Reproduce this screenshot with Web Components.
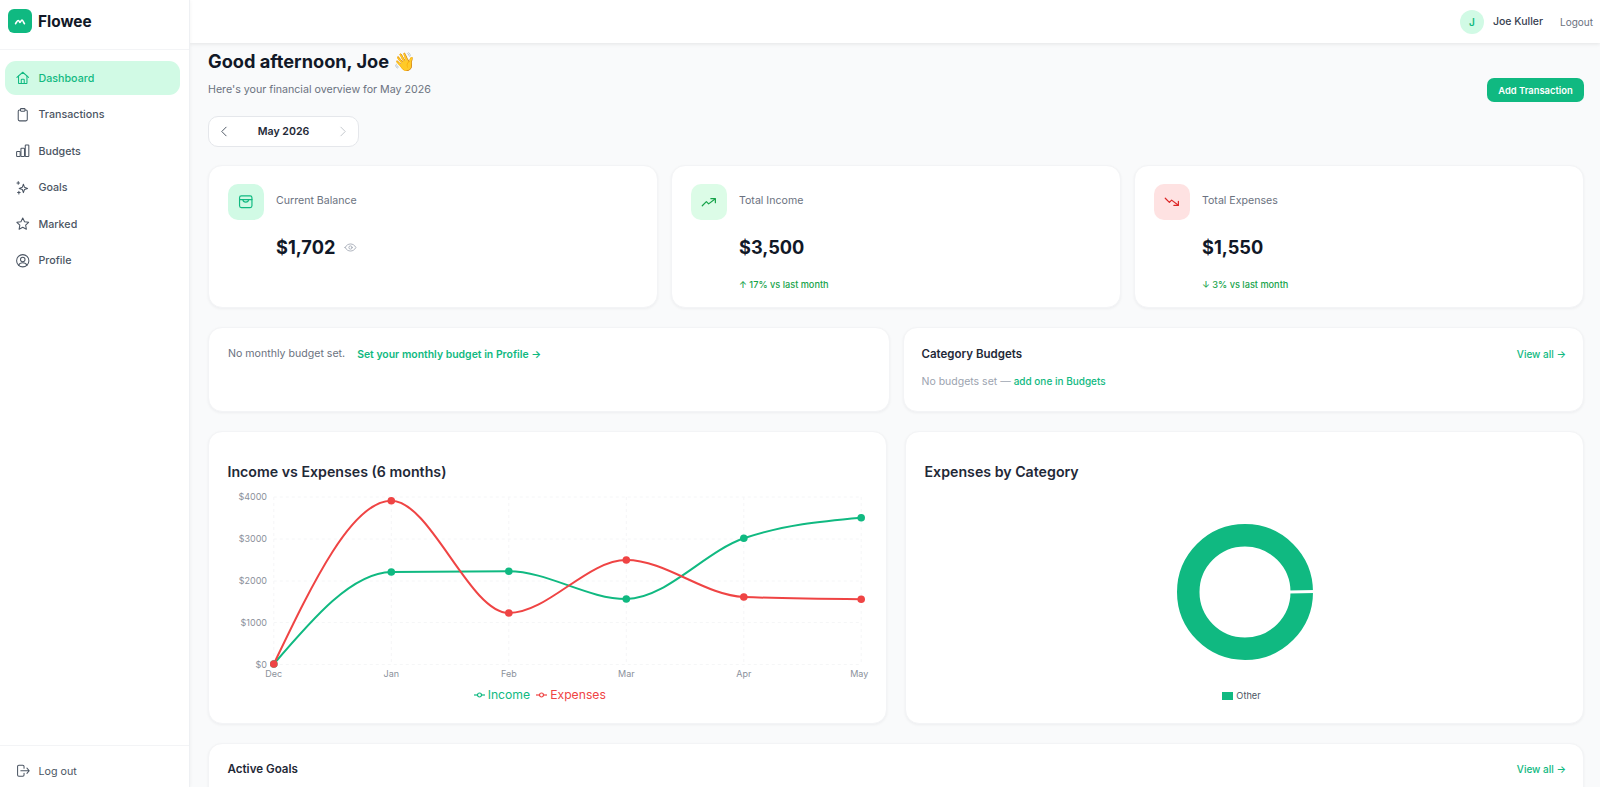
<!DOCTYPE html>
<html><head><meta charset="utf-8"><title>Flowee</title>
<style>
html,body{margin:0;padding:0;height:100%;overflow:hidden;background:#f9fafb;font-family:Inter,"Noto Sans",sans-serif;color:#111827}
</style></head><body>
<flowee-app>
  <flowee-sidebar slot="side">
    <nav-item icon="home" active>Dashboard</nav-item>
    <nav-item icon="clip">Transactions</nav-item>
    <nav-item icon="bars">Budgets</nav-item>
    <nav-item icon="spark">Goals</nav-item>
    <nav-item icon="star">Marked</nav-item>
    <nav-item icon="user">Profile</nav-item>
  </flowee-sidebar>
  <flowee-topbar slot="top"></flowee-topbar>
  <page-head></page-head>
  <month-picker></month-picker>
  <card-row cols="3" gap="13" top="18">
    <stat-card icon="wallet" tone="mint" label="Current Balance" value="$1,702" eye></stat-card>
    <stat-card icon="up" tone="green" label="Total Income" value="$3,500" delta="↑ 17% vs last month"></stat-card>
    <stat-card icon="down" tone="red" label="Total Expenses" value="$1,550" delta="↓ 3% vs last month"></stat-card>
  </card-row>
  <card-row cols="2" gap="13" top="19">
    <budget-note></budget-note>
    <category-budgets></category-budgets>
  </card-row>
  <card-row cols="2" gap="18" top="19.500">
    <line-chart></line-chart>
    <donut-chart></donut-chart>
  </card-row>
  <card-row cols="1" gap="0" top="19">
    <active-goals></active-goals>
  </card-row>
</flowee-app>
<script>
const ICONS={
home:'<path d="M3 11.500 12 3.500l9 8"/><path d="M5.500 9.500V20a.8.8 0 0 0 .8.8h11.400a.8.8 0 0 0 .8-.8V9.500"/><path d="M9.700 20.800v-5.600a1 1 0 0 1 1-1h2.600a1 1 0 0 1 1 1v5.600"/>',
clip:'<path d="M8.500 4.500H7A2 2 0 0 0 5 6.500v13a2 2 0 0 0 2 2h10a2 2 0 0 0 2-2v-13a2 2 0 0 0-2-2h-1.500"/><rect x="8.500" y="2.500" width="7" height="4" rx="1"/>',
bars:'<rect x="2.500" y="13" width="5.500" height="8" rx="1"/><rect x="9.200" y="8" width="5.500" height="13" rx="1"/><rect x="15.900" y="3" width="5.500" height="18" rx="1"/>',
spark:'<path d="M13 6.500l1.700 4.800 4.800 1.700-4.800 1.700-1.700 4.800-1.700-4.800-4.800-1.700 4.800-1.700z"/><path d="M5 2.500v4M3 4.500h4M6 17.500v4M4 19.500h4"/>',
star:'<path d="M12 3l2.800 5.800 6.300.9-4.600 4.400 1.100 6.300L12 17.500 6.400 20.400l1.100-6.300-4.600-4.400 6.300-.9z"/>',
user:'<circle cx="12" cy="12" r="9.500"/><circle cx="12" cy="10" r="3.500"/><path d="M5.500 19c1.200-2.600 3.600-3.800 6.500-3.800s5.300 1.200 6.500 3.800"/>',
logout:'<path d="M14 8V5.500A2 2 0 0 0 12 3.500H6A2 2 0 0 0 4 5.500v13a2 2 0 0 0 2 2h6a2 2 0 0 0 2-2V16"/><path d="M9 12h13M18.500 8l3.500 4-3.500 4"/>',
wallet:'<rect x="3.500" y="4" width="17" height="16" rx="2.500"/><path d="M3.500 9h17"/><path d="M8 9c.3 2.300 2 3.500 4 3.500s3.700-1.200 4-3.500"/>',
up:'<path d="M3 17l5.500-5.500 3 3L20 8"/><path d="M14.500 7.500H20.500V13"/>',
down:'<path d="M3 7l5.500 5.500 3-3L20 16"/><path d="M14.500 16.500H20.500V11"/>',
eye:'<path d="M2 12c2.500-4.500 6-6.500 10-6.500s7.500 2 10 6.500c-2.500 4.500-6 6.500-10 6.500S4.500 16.500 2 12z"/><circle cx="12" cy="12" r="3"/>',
left:'<path d="M15 4l-8 8 8 8"/>',
right:'<path d="M9 4l8 8-8 8"/>'};
function svg(name,size,color,sw){return `<svg xmlns="http://www.w3.org/2000/svg" width="${size}" height="${size}" viewBox="0 0 24 24" fill="none" stroke="${color}" stroke-width="${sw}" stroke-linecap="round" stroke-linejoin="round" aria-hidden="true">${ICONS[name]}</svg>`}
class Base extends HTMLElement{
  constructor(){super();this.attachShadow({mode:'open'});}
  connectedCallback(){this.shadowRoot.innerHTML=this.render();}
}
customElements.define('flowee-app',class extends Base{render(){return `<style>
:host{display:grid;grid-template-columns:190px 1fr;grid-template-rows:43px 1fr;height:787px;overflow:hidden}
.side{grid-row:1/3;grid-column:1;position:relative;z-index:3;display:flex;min-height:0}
.top{grid-row:1;grid-column:2;position:relative;z-index:2;display:flex}
main{grid-row:2;grid-column:2;overflow:hidden;padding:0 16px 0 18px;min-width:0}
</style><div class="side"><slot name="side"></slot></div><div class="top"><slot name="top"></slot></div><main><slot></slot></main>`}});
customElements.define('flowee-sidebar',class extends Base{render(){return `<style>
:host{display:flex;flex-direction:column;width:190px;box-sizing:border-box;background:#fff;border-right:1px solid #eef0f3;box-shadow:1px 0 3px rgba(0,0,0,.03)}
.brand{height:50px;box-sizing:border-box;border-bottom:1px solid #f3f4f6;display:flex;align-items:flex-start;padding:9px 0 0 8px;gap:6px}
.logo{width:24px;height:24px;border-radius:6px;background:#10b981;display:flex;align-items:center;justify-content:center}
.name{font-size:15.400px;font-weight:700;line-height:25px;color:#111827}
nav{flex:1;padding:11px 9px 0 5px;display:flex;flex-direction:column;gap:2.500px}
.foot{height:42px;box-sizing:border-box;border-top:1px solid #f3f4f6;padding:9px 9px 0 5px;display:flex;align-items:center}
</style><div class="brand"><span class="logo"><svg width="12" height="9" viewBox="0 0 14 10" fill="none" stroke="#fff" stroke-width="1.900" stroke-linecap="round" stroke-linejoin="round"><path d="M1.800 7.500C3 6 3.800 3.800 5 3.800S6.300 6 7 6 8.300 3.300 9.300 3.300 11 6 12.200 7.500"/></svg></span><span class="name">Flowee</span></div>
<nav><slot></slot></nav><div class="foot"><nav-item icon="logout" style="font-weight:400">Log out</nav-item></div>`}});
customElements.define('nav-item',class extends Base{render(){const a=this.hasAttribute('active');const c=a?'#10b981':'#4b5563';return `<style>
:host{display:flex;align-items:center;height:34px;box-sizing:border-box;padding-left:9.500px;gap:8.500px;border-radius:11px;font-size:10.700px;font-weight:500;flex:none;width:100%;color:${c};${a?'background:#d1fae5;':''}}
svg{display:block;flex:none}
</style>${svg(this.getAttribute('icon'),15.500,c,1.600)}<span><slot></slot></span>`}});
customElements.define('flowee-topbar',class extends Base{render(){return `<style>
:host{display:flex;flex:1;align-items:center;justify-content:flex-end;background:#fff;box-shadow:0 1px 4px rgba(0,0,0,.09);padding-right:7px;font-size:10.500px}
.av{width:24px;height:24px;border-radius:50%;background:#d1fae5;color:#10b981;font-weight:600;display:flex;align-items:center;justify-content:center;margin-right:9px;font-size:10px}
.n{font-weight:500;color:#374151;margin-right:17px}.l{color:#6b7280;font-size:10px}
</style><span class="av">J</span><span class="n">Joe Kuller</span><span class="l">Logout</span>`}});
customElements.define('page-head',class extends Base{render(){return `<style>
:host{display:flex;justify-content:space-between;align-items:flex-end}
h1{margin:5px 0 0;font-size:18.200px;line-height:26px;font-weight:700;color:#111827}
p{margin:8px 0 0;font-size:10.650px;line-height:16px;color:#6b7280}
button{all:unset;box-sizing:border-box;width:97px;height:24px;border-radius:7px;background:#10b981;color:#fff;font-size:9.400px;font-weight:600;display:flex;align-items:center;justify-content:center;margin-bottom:-4px}
</style><div><h1>Good afternoon, Joe 👋</h1><p>Here's your financial overview for May 2026</p></div><button>Add Transaction</button>`}});
customElements.define('month-picker',class extends Base{render(){return `<style>
:host{display:flex;align-items:center;justify-content:space-between;width:151px;height:31px;box-sizing:border-box;margin-top:18px;background:#fff;border:1px solid #e5e7eb;border-radius:10px;padding:0 9px;font-size:10.600px;font-weight:600;color:#1f2937}
svg{display:block}
</style>${svg('left',13,'#4b5563',1.800)}<span>May 2026</span>${svg('right',13,'#c2c6cc',1.800)}`}});
customElements.define('card-row',class extends Base{render(){const c=this.getAttribute('cols');return `<style>
:host{display:grid;grid-template-columns:repeat(${c},minmax(0,1fr));column-gap:${this.getAttribute('gap')}px;margin-top:${this.getAttribute('top')}px}
</style><slot></slot>`}});
const CARD=':host{display:block;box-sizing:border-box;background:#fff;border:1px solid #f3f4f6;border-radius:14px;box-shadow:0 1px 3px rgba(17,24,39,.05);min-width:0}';
customElements.define('stat-card',class extends Base{render(){
 const t={mint:['#d1fae5','#10b981'],green:['#dcfce7','#16a34a'],red:['#fee2e2','#dc2626']}[this.getAttribute('tone')];
 const d=this.getAttribute('delta');
 return `<style>${CARD}
:host{height:143px;padding:18px 19px;display:grid;grid-template-columns:36px 1fr;column-gap:12px;align-content:start}
.ic{width:36px;height:36px;border-radius:10px;background:${t[0]};display:flex;align-items:center;justify-content:center}
.l{font-size:10.600px;color:#6b7280;line-height:16px;margin-top:9px}
.v{grid-column:2;display:flex;align-items:center;gap:9px;font-size:18.200px;font-weight:700;color:#111827;line-height:28px;margin-top:13px}
.d{grid-column:2;font-size:9.200px;font-weight:500;color:#16a34a;line-height:14px;margin-top:17px}
svg{display:block}
</style><div class="ic">${svg(this.getAttribute('icon'),this.getAttribute('icon')=='wallet'?17.500:18,t[1],1.600)}</div><div class="l">${this.getAttribute('label')}</div>
<div class="v"><span>${this.getAttribute('value')}</span>${this.hasAttribute('eye')?svg('eye',13,'#9ca3af',1.500):''}</div>${d?`<div class="d">${d}</div>`:''}`}});
customElements.define('budget-note',class extends Base{render(){return `<style>${CARD}
:host{height:84.500px;padding:18px 19px;font-size:10.600px;line-height:16px;display:flex;gap:12px;align-items:flex-start}
span{color:#6b7280}a{color:#10b981;font-weight:600;font-size:10.450px;text-decoration:none;margin-top:.5px}
</style><span>No monthly budget set.</span><a>Set your monthly budget in Profile →</a>`}});
customElements.define('category-budgets',class extends Base{render(){return `<style>${CARD}
:host{height:84.500px;padding:18px 17px 0 18px}
.h{display:flex;justify-content:space-between;align-items:center;line-height:16px}
b{font-size:11.500px;font-weight:600;color:#1f2937}a{color:#10b981;font-weight:500;font-size:10px;text-decoration:none}
p{margin:12px 0 0;font-size:10.500px;line-height:14px;color:#9ca3af}
</style><div class="h"><b>Category Budgets</b><a>View all →</a></div><p>No budgets set — <a>add one in Budgets</a></p>`}});
customElements.define('line-chart',class extends Base{
 render(){
  const X=[273.300,390.800,508.300,625.800,743.300,860.700],Ox=227.500,Oy=488;
  const inc=[664,572,571.300,599,538.300,517.700],exp=[664,500.700,613,560,597,599.300];
  const tick=['$4000','$3000','$2000','$1000','$0'],gy=[497,539,581,622.500,664.500];
  const mon=['Dec','Jan','Feb','Mar','Apr','May'];
  const sgn=v=>v<0?-1:1;
  const path=(ys)=>{const P=X.map((x,i)=>[x-Ox,ys[i]-Oy]);const n=P.length,T=[];
   for(let i=1;i<n-1;i++){const h0=P[i][0]-P[i-1][0],h1=P[i+1][0]-P[i][0],s0=(P[i][1]-P[i-1][1])/h0,s1=(P[i+1][1]-P[i][1])/h1,p=(s0*h1+s1*h0)/(h0+h1);
    T[i]=(sgn(s0)+sgn(s1))*Math.min(Math.abs(s0),Math.abs(s1),.5*Math.abs(p))||0;}
   T[0]=(3*(P[1][1]-P[0][1])/(P[1][0]-P[0][0])-T[1])/2;
   T[n-1]=(3*(P[n-1][1]-P[n-2][1])/(P[n-1][0]-P[n-2][0])-T[n-2])/2;
   let d=`M${P[0][0]} ${P[0][1]}`;
   for(let i=1;i<n;i++){const dx=(P[i][0]-P[i-1][0])/3;d+=`C${P[i-1][0]+dx} ${P[i-1][1]+dx*T[i-1]} ${P[i][0]-dx} ${P[i][1]-dx*T[i]} ${P[i][0]} ${P[i][1]}`;}
   return d;};
  const grid=gy.map(y=>`<line x1="${X[0]-Ox}" x2="${X[5]-Ox}" y1="${y-Oy}" y2="${y-Oy}"/>`).join('')+X.map(x=>`<line x1="${x-Ox}" x2="${x-Ox}" y1="${gy[0]-Oy}" y2="${gy[4]-Oy}"/>`).join('');
  const dots=(ys,c)=>X.map((x,i)=>`<circle cx="${x-Ox}" cy="${ys[i]-Oy}" r="3.800" fill="${c}"/>`).join('');
  return `<style>${CARD}
:host{height:293px;padding:30px 0 0 18.500px}
h3{margin:0;font-size:14.200px;line-height:20px;font-weight:600;color:#1f2937}
svg{display:block}
.c{display:block;margin-top:6px}
.leg{display:flex;justify-content:center;gap:6px;font-size:12.200px;line-height:16px;margin:1px 34px 0 0}
.it{display:flex;align-items:center;gap:3px}
</style><h3>Income vs Expenses (6 months)</h3>
<svg class="c" width="645" height="198" viewBox="0 0 645 198" font-family="Inter,sans-serif">
<g stroke="#f5f6f7" stroke-width="1" stroke-dasharray="3 3">${grid}</g>
<g font-size="9" fill="#8b919b" text-anchor="end">${tick.map((t,i)=>`<text x="39" y="${gy[i]-Oy+3.200}">${t}</text>`).join('')}</g>
<g font-size="9" fill="#8b919b" text-anchor="middle">${mon.map((m,i)=>`<text x="${i==5?X[i]-Ox-2:X[i]-Ox}" y="${664-Oy+13}">${m}</text>`).join('')}</g>
<path d="${path(inc)}" fill="none" stroke="#10b981" stroke-width="2"/><path d="${path(exp)}" fill="none" stroke="#ef4444" stroke-width="2"/>
${dots(inc,'#10b981')}${dots(exp,'#ef4444')}</svg>
<div class="leg"><span class="it" style="color:#10b981"><svg width="11" height="6" viewBox="0 0 11 6"><path d="M0 3h11" stroke="#10b981" stroke-width="1.200"/><circle cx="5.500" cy="3" r="2" fill="#fff" stroke="#10b981" stroke-width="1.200"/></svg>Income</span>
<span class="it" style="color:#ef4444"><svg width="11" height="6" viewBox="0 0 11 6"><path d="M0 3h11" stroke="#ef4444" stroke-width="1.200"/><circle cx="5.500" cy="3" r="2" fill="#fff" stroke="#ef4444" stroke-width="1.200"/></svg>Expenses</span></div>`}});
customElements.define('donut-chart',class extends Base{render(){return `<style>${CARD}
:host{height:293px;padding:30px 0 0 18.500px}
h3{margin:0;font-size:14.200px;line-height:20px;font-weight:600;color:#1f2937}
.d{display:flex;justify-content:center;margin:40px 0 0 -18.500px}
svg{display:block}
.leg{display:flex;justify-content:center;align-items:center;gap:3px;margin:28px 0 0 -24.500px;font-size:9.200px;line-height:12px;color:#4b5563}
.sw{width:11px;height:8px;background:#10b981}
</style><h3>Expenses by Category</h3>
<div class="d"><svg width="140" height="140" viewBox="0 0 140 140"><circle cx="70" cy="70" r="56.750" fill="none" stroke="#10b981" stroke-width="22.500"/><path d="M114 70 L140 69.500" stroke="#fff" stroke-width="3" fill="none"/></svg></div>
<div class="leg"><span class="sw"></span><span>Other</span></div>`}});
customElements.define('active-goals',class extends Base{render(){return `<style>${CARD}
:host{height:120px;padding:17px 17px 0 18.500px}
.h{display:flex;justify-content:space-between;align-items:center;line-height:16px}
b{font-size:11.600px;font-weight:600;color:#1f2937}a{color:#10b981;font-weight:500;font-size:10px}
</style><div class="h"><b>Active Goals</b><a>View all →</a></div>`}});
</script></body></html>
